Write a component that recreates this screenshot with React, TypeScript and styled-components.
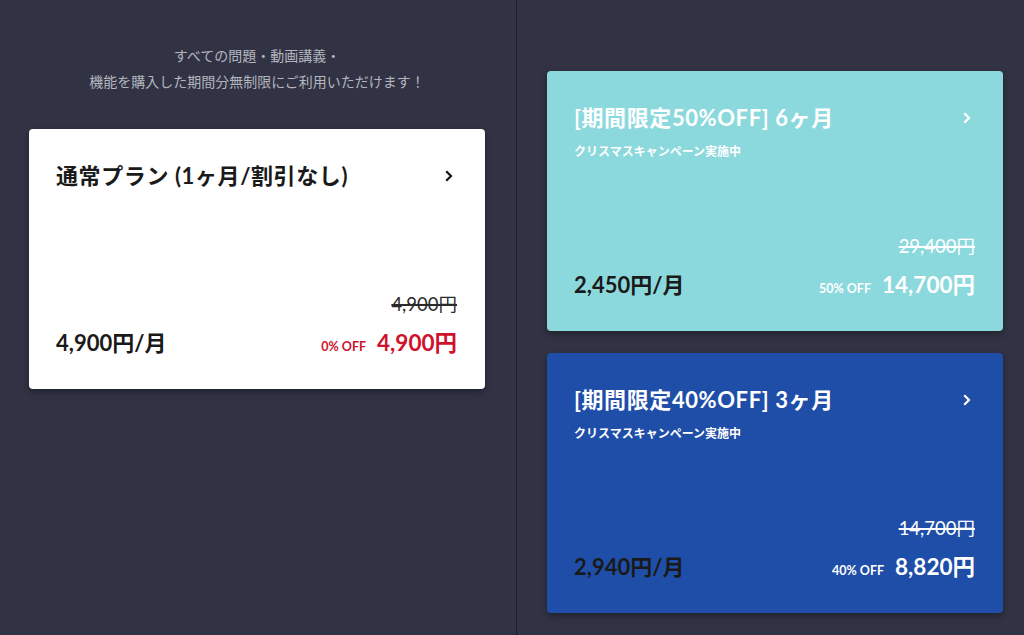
import React from "react";
import styled, { createGlobalStyle } from "styled-components";

const Global = createGlobalStyle`
  html, body { margin: 0; padding: 0; background: #313344; }
  body { font-family: Lato, "Noto Sans CJK JP", sans-serif; }
  * { box-sizing: border-box; }
`;

const Page = styled.div`
  display: grid;
  grid-template-columns: 517px 1fr;
  width: 1024px;
  height: 635px;
  background: #313344;
  overflow: hidden;
`;

const LeftColumn = styled.div`
  display: flex;
  flex-direction: column;
  align-items: flex-start;
  padding: 42px 31px 0 29px;
  border-right: 1.5px solid #1c1d27;
`;

const RightColumn = styled.div`
  display: flex;
  flex-direction: column;
  gap: 22px;
  padding: 71px 21px 0 30px;
`;

const Intro = styled.p`
  margin: 0 0 35px;
  width: 456px;
  text-align: center;
  font-size: 14px;
  line-height: 26px;
  color: #b3b5bf;
  font-family: "Noto Sans CJK JP", sans-serif;
`;

type Variant = "white" | "cyan" | "blue";

const palette: Record<Variant, { bg: string; title: string; accent: string; strike: string }> = {
  white: { bg: "#ffffff", title: "#1a1a1a", accent: "#d0112b", strike: "#2a2a2a" },
  cyan: { bg: "#8bd9dd", title: "#ffffff", accent: "#ffffff", strike: "#ffffff" },
  blue: { bg: "#1f4ea8", title: "#ffffff", accent: "#ffffff", strike: "#ffffff" },
};

const Card = styled.div<{ $v: Variant }>`
  width: 456px;
  height: 260px;
  background: ${(p) => palette[p.$v].bg};
  border-radius: 4px;
  box-shadow: 0 3px 6px rgba(0, 0, 0, 0.35);
  display: flex;
  flex-direction: column;
  padding: 32px 28px 31px 27px;
  cursor: pointer;
`;

const TitleRow = styled.div`
  display: flex;
  align-items: center;
  justify-content: space-between;
`;

const Title = styled.h2<{ $v: Variant }>`
  margin: 0;
  font-size: 22px;
  line-height: 30px;
  font-weight: 700;
  color: ${(p) => palette[p.$v].title};
  letter-spacing: 0.6px;
`;

const Chevron = styled.svg<{ $v: Variant }>`
  width: 10px;
  height: 14px;
  margin-right: 3px;
  stroke: ${(p) => (p.$v === "white" ? "#111" : "#fff")};
`;

const Sub = styled.div`
  margin-top: 10px;
  font-size: 12px;
  line-height: 18px;
  font-weight: 700;
  color: #ffffff;
`;

const Bottom = styled.div`
  margin-top: auto;
  display: flex;
  flex-direction: column;
  gap: 12px;
`;

const Strike = styled.div<{ $v: Variant }>`
  align-self: flex-end;
  font-size: 18.5px;
  line-height: 24px;
  color: ${(p) => palette[p.$v].strike};
  text-decoration: line-through;
  text-decoration-thickness: 1.5px;
`;

const PriceRow = styled.div`
  display: flex;
  align-items: baseline;
  justify-content: space-between;
`;

const Monthly = styled.div`
  font-size: 22px;
  line-height: 30px;
  font-weight: 700;
  color: #1a1a1a;
`;

const Deal = styled.div<{ $v: Variant }>`
  display: flex;
  align-items: baseline;
  gap: 11px;
  color: ${(p) => palette[p.$v].accent};
  font-weight: 700;
`;

const Off = styled.span`
  font-size: 12.5px;
`;

const Price = styled.span`
  font-size: 22.5px;
  line-height: 30px;
`;

type Plan = {
  v: Variant;
  title: string;
  sub?: string;
  strike: string;
  monthly: string;
  off: string;
  price: string;
};

const PlanCard = ({ p }: { p: Plan }) => (
  <Card $v={p.v}>
    <TitleRow>
      <Title $v={p.v}>{p.title}</Title>
      <Chevron $v={p.v} viewBox="0 0 10 14" fill="none" strokeWidth="2.2" strokeLinecap="square">
        <polyline points="3,3 7,7 3,11" />
      </Chevron>
    </TitleRow>
    {p.sub && <Sub>{p.sub}</Sub>}
    <Bottom>
      <Strike $v={p.v}>{p.strike}</Strike>
      <PriceRow>
        <Monthly>{p.monthly}</Monthly>
        <Deal $v={p.v}>
          <Off>{p.off}</Off>
          <Price>{p.price}</Price>
        </Deal>
      </PriceRow>
    </Bottom>
  </Card>
);

const plans: Plan[] = [
  { v: "white", title: "通常プラン (1ヶ月/割引なし)", strike: "4,900円", monthly: "4,900円/月", off: "0% OFF", price: "4,900円" },
  { v: "cyan", title: "[期間限定50%OFF] 6ヶ月", sub: "クリスマスキャンペーン実施中", strike: "29,400円", monthly: "2,450円/月", off: "50% OFF", price: "14,700円" },
  { v: "blue", title: "[期間限定40%OFF] 3ヶ月", sub: "クリスマスキャンペーン実施中", strike: "14,700円", monthly: "2,940円/月", off: "40% OFF", price: "8,820円" },
];

export default function App() {
  return (
    <>
      <Global />
      <Page>
        <LeftColumn>
          <Intro>
            すべての問題・動画講義・
            <br />
            機能を購入した期間分無制限にご利用いただけます！
          </Intro>
          <PlanCard p={plans[0]} />
        </LeftColumn>
        <RightColumn>
          <PlanCard p={plans[1]} />
          <PlanCard p={plans[2]} />
        </RightColumn>
      </Page>
    </>
  );
}
